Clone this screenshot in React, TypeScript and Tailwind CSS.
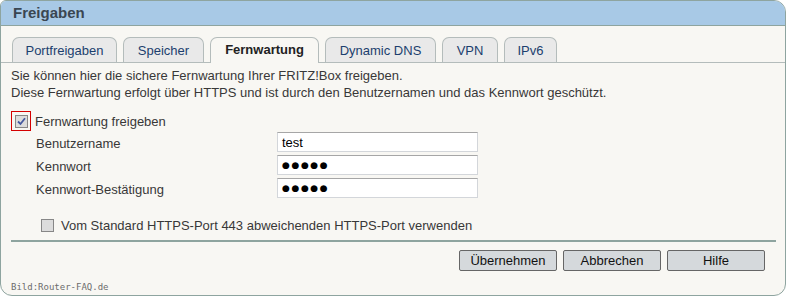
import { useState } from "react";

const tabs = [
  { label: "Portfreigaben", w: "w-[105px]" },
  { label: "Speicher", w: "w-[81px]" },
  { label: "Fernwartung", w: "w-[109px]" },
  { label: "Dynamic DNS", w: "w-[111px]" },
  { label: "VPN", w: "w-[56px]" },
  { label: "IPv6", w: "w-[53px]" },
];

function Tab({ label, w, active }: { label: string; w: string; active: boolean }) {
  if (active) {
    return (
      <div
        className={`${w} -mb-px flex h-[26px] items-center justify-center rounded-t-[7px] border border-b-0 border-[#b4bcbb] bg-[#f8f7f3] pb-[2px] text-[13px] font-bold text-[#222]`}
      >
        {label}
      </div>
    );
  }
  return (
    <div
      className={`${w} flex h-[25px] items-center justify-center rounded-t-[7px] border border-b-0 border-[#b4bcbb] bg-[#e9e9e9] pt-[2px] text-[13px] text-[#1c3f6e]`}
    >
      {label}
    </div>
  );
}

function Checkbox({ checked }: { checked: boolean }) {
  return (
    <span className="flex h-[13px] w-[13px] items-center justify-center border border-[#878787] bg-[#dcdcdc]">
      {checked && (
        <svg width="9" height="9" viewBox="0 0 9 9">
          <path d="M1 4.5 L3.5 7 L8 1.2" stroke="#45599f" strokeWidth="1.8" fill="none" />
        </svg>
      )}
    </span>
  );
}

function Button({ children }: { children: React.ReactNode }) {
  return (
    <button
      type="button"
      className="h-[21px] w-[98px] rounded-[2px] border border-[#666] bg-[#d5d9dc] text-[13px] leading-[19px] text-[#111]"
    >
      {children}
    </button>
  );
}

export default function App() {
  const [aktiv] = useState("Fernwartung");

  return (
    <div className="h-[297px] w-[787px] bg-white font-['Liberation_Sans',Arial,sans-serif]">
      <div className="flex h-[296px] w-[786px] flex-col overflow-hidden rounded-tl-[6px] rounded-tr-[12px] rounded-b-[12px] border border-[#8ea49f] bg-[#f8f7f3]">
        <div className="flex h-[25px] shrink-0 items-center border-b border-[#8ea49f] bg-[#a8c9e6] px-[12px] text-[15px] font-bold text-[#3a4652]">
          Freigaben
        </div>

        <div className="flex items-end gap-[6px] border-b border-[#b4bcbb] px-[11px] pt-[11px]">
          {tabs.map((t) => (
            <Tab key={t.label} label={t.label} w={t.w} active={t.label === aktiv} />
          ))}
        </div>

        <div className="pl-[10px] pr-[9px] pt-[4px] text-[13px] leading-[17px] text-[#383838]">
          <p>Sie können hier die sichere Fernwartung Ihrer FRITZ!Box freigeben.</p>
          <p>Diese Fernwartung erfolgt über HTTPS und ist durch den Benutzernamen und das Kennwort geschützt.</p>

          <div className="mt-[10px] flex h-[20px] items-center gap-[4px]">
            <span className="flex h-[20px] w-[20px] items-center justify-center border border-[#d40000]">
              <Checkbox checked />
            </span>
            <span>Fernwartung freigeben</span>
          </div>

          <div className="mt-[1px] flex flex-col gap-[3px] pl-[25px]">
            {[
              ["Benutzername", "test"],
              ["Kennwort", "●●●●●"],
              ["Kennwort-Bestätigung", "●●●●●"],
            ].map(([label, wert]) => (
              <div key={label} className="flex items-center">
                <span className="w-[241px] pt-[2px]">{label}</span>
                <div className="flex h-[20px] w-[201px] items-center border border-[#d3d6da] border-t-[#a6a6a6] bg-white px-[4px] text-[13px] text-black">
                  {wert.startsWith("●") ? (
                    <span className="font-['DejaVu_Sans',sans-serif] text-[9px] tracking-[1.6px]">{wert}</span>
                  ) : (
                    wert
                  )}
                </div>
              </div>
            ))}
          </div>

          <div className="mt-[19px] flex items-center gap-[7px] pl-[30px]">
            <Checkbox checked={false} />
            <span>Vom Standard HTTPS-Port 443 abweichenden HTTPS-Port verwenden</span>
          </div>

          <div className="mt-[6px] h-[2px] bg-[#8ea49f]" />

          <div className="mt-[8px] flex justify-end gap-[6px] pr-[11px]">
            <Button>Übernehmen</Button>
            <Button>Abbrechen</Button>
            <Button>Hilfe</Button>
          </div>
        </div>

        <div className="mt-auto px-[10px] pb-[1px] font-['DejaVu_Sans_Mono',monospace] text-[9px] text-[#6c6c6c]">
          Bild:Router-FAQ.de
        </div>
      </div>
    </div>
  );
}
